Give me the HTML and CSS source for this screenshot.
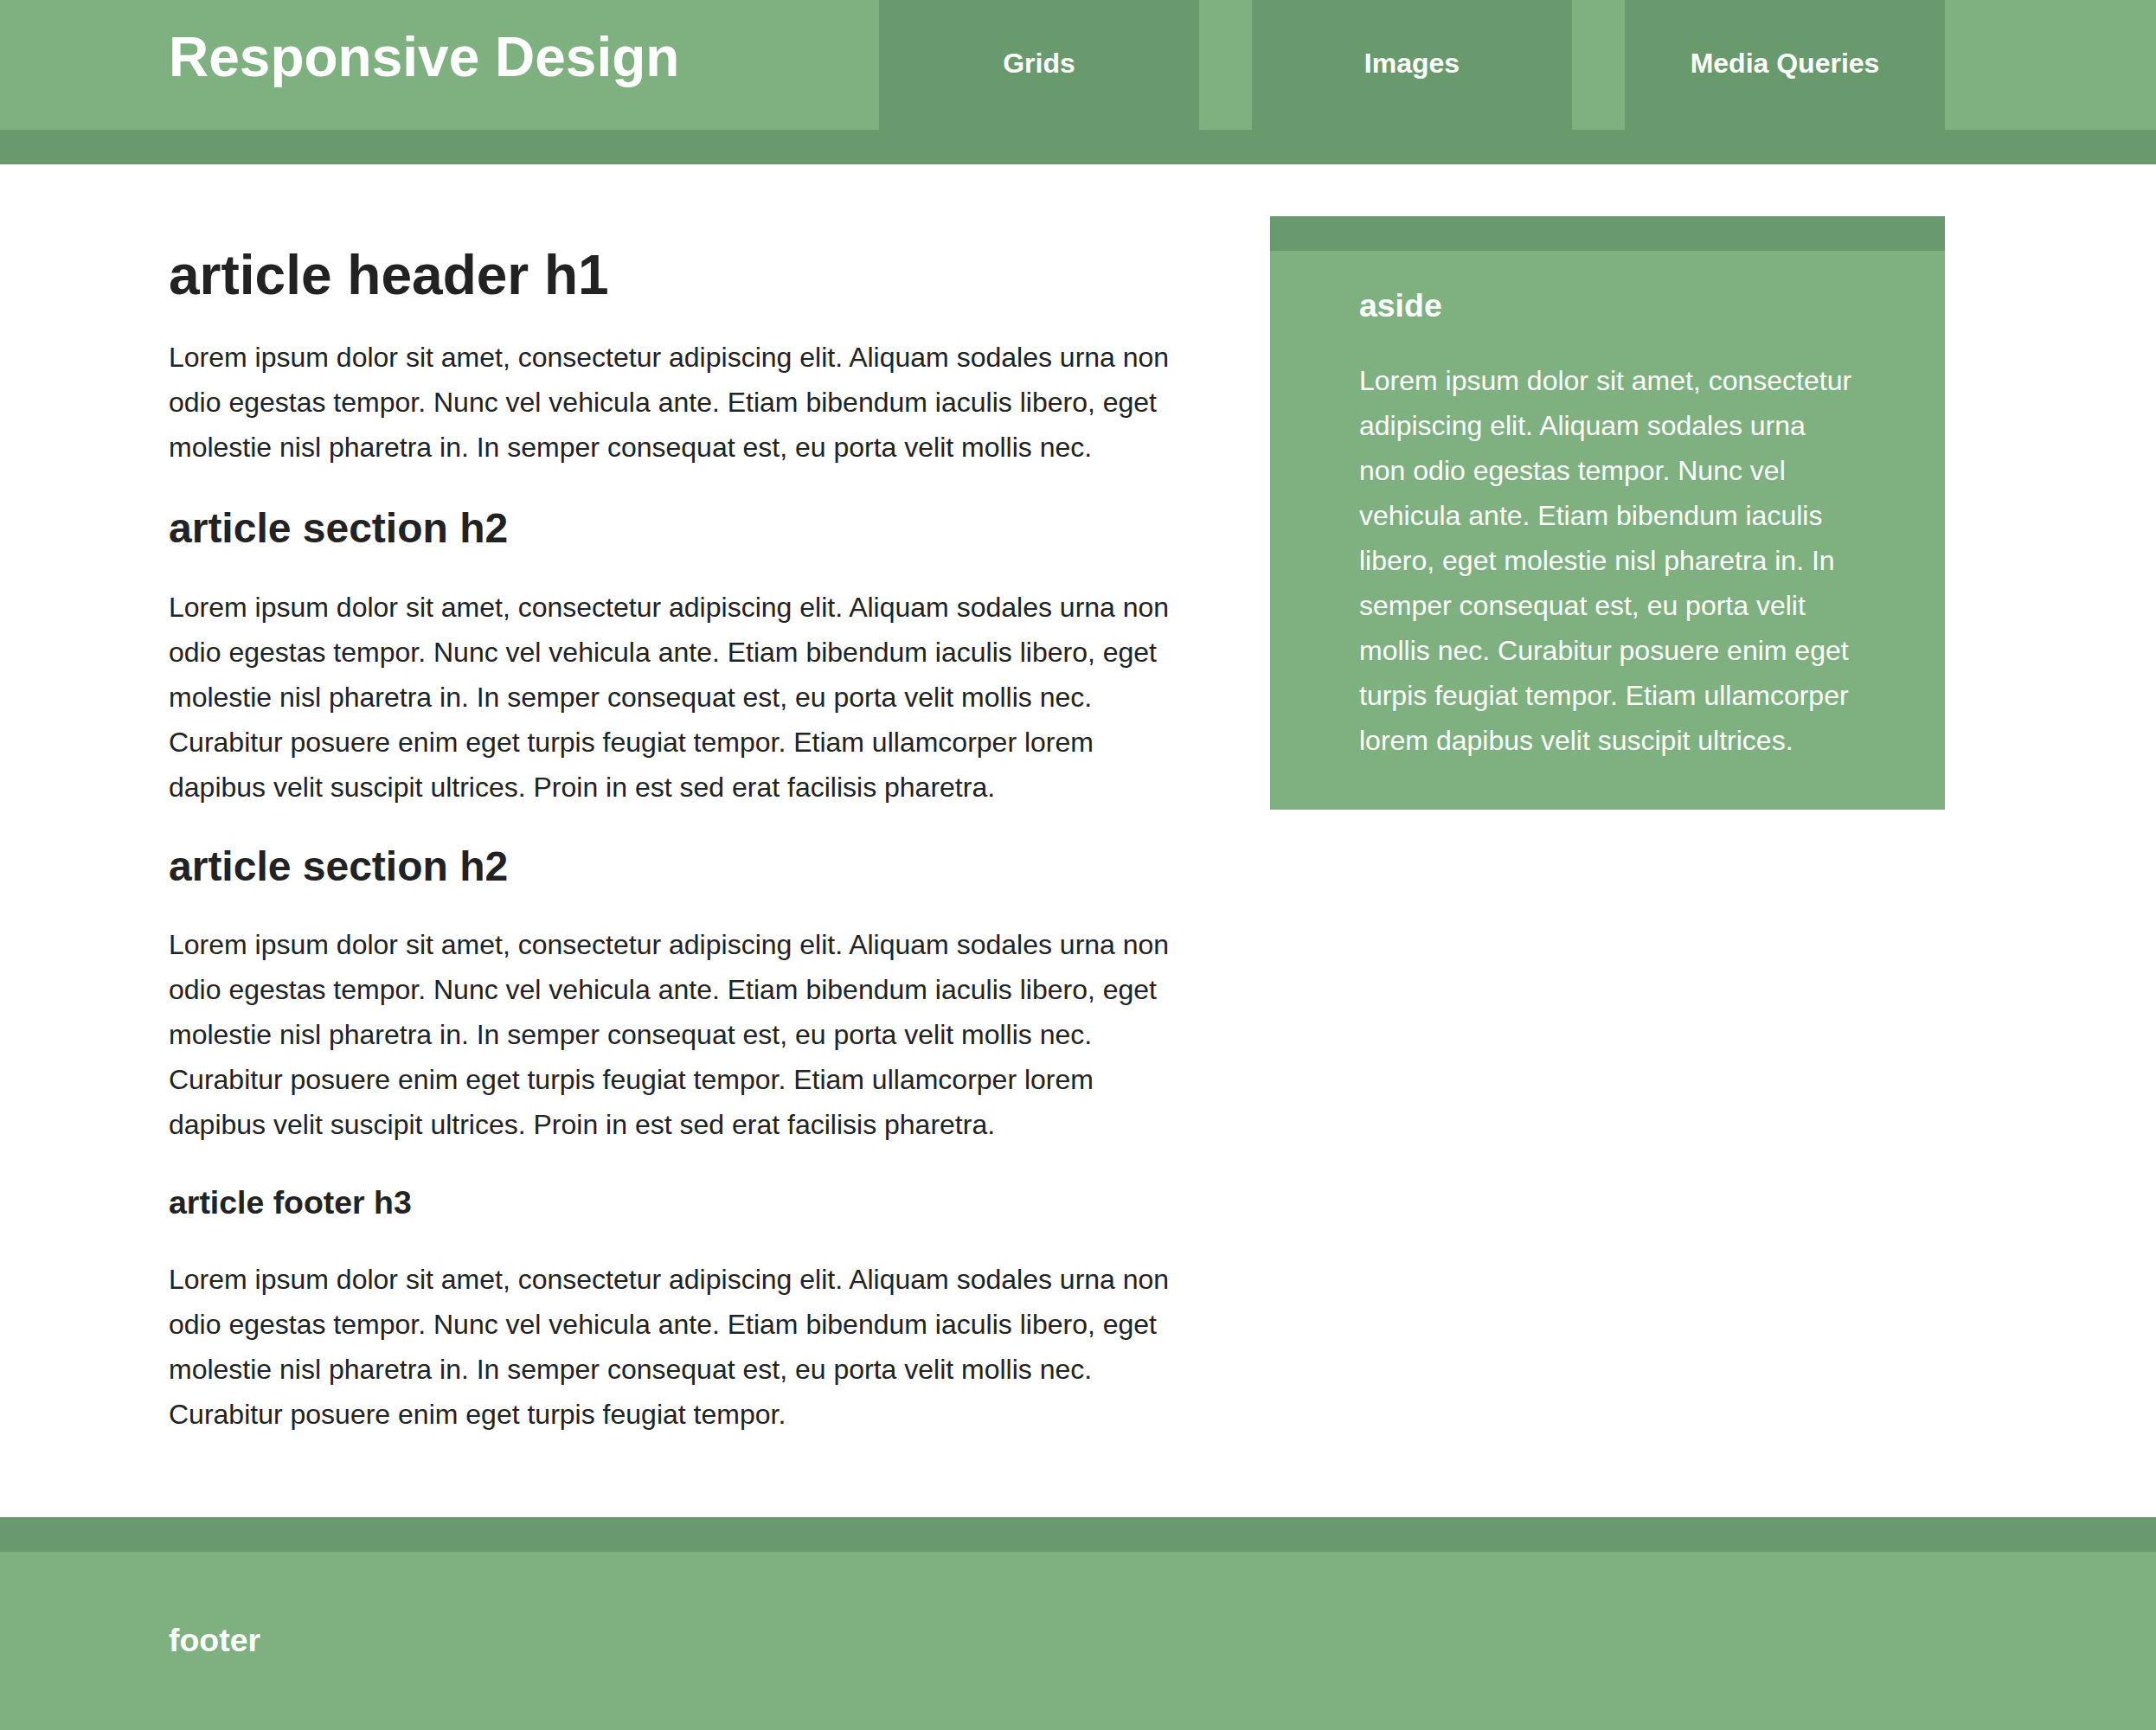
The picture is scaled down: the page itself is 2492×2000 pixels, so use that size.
FILE: index.html
```html
<!DOCTYPE html>
<html lang="en">
<head>
<meta charset="utf-8">
<title>Responsive Design</title>
<link rel="stylesheet" href="styles.css">
</head>
<body>
<header class="site-header">
  <div class="site-title">Responsive Design</div>
  <nav class="site-nav">
    <a class="nav-item" href="#">Grids</a>
    <a class="nav-item" href="#">Images</a>
    <a class="nav-item" href="#">Media Queries</a>
  </nav>
</header>
<main class="layout">
  <article class="article">
    <h1 class="h1">article header h1</h1>
    <p class="text">Lorem ipsum dolor sit amet, consectetur adipiscing elit. Aliquam sodales urna non odio egestas tempor. Nunc vel vehicula ante. Etiam bibendum iaculis libero, eget molestie nisl pharetra in. In semper consequat est, eu porta velit mollis nec.</p>
    <h2 class="h2">article section h2</h2>
    <p class="text">Lorem ipsum dolor sit amet, consectetur adipiscing elit. Aliquam sodales urna non odio egestas tempor. Nunc vel vehicula ante. Etiam bibendum iaculis libero, eget molestie nisl pharetra in. In semper consequat est, eu porta velit mollis nec. Curabitur posuere enim eget turpis feugiat tempor. Etiam ullamcorper lorem dapibus velit suscipit ultrices. Proin in est sed erat facilisis pharetra.</p>
    <h2 class="h2 h2-second">article section h2</h2>
    <p class="text">Lorem ipsum dolor sit amet, consectetur adipiscing elit. Aliquam sodales urna non odio egestas tempor. Nunc vel vehicula ante. Etiam bibendum iaculis libero, eget molestie nisl pharetra in. In semper consequat est, eu porta velit mollis nec. Curabitur posuere enim eget turpis feugiat tempor. Etiam ullamcorper lorem dapibus velit suscipit ultrices. Proin in est sed erat facilisis pharetra.</p>
    <h3 class="h3">article footer h3</h3>
    <p class="text">Lorem ipsum dolor sit amet, consectetur adipiscing elit. Aliquam sodales urna non odio egestas tempor. Nunc vel vehicula ante. Etiam bibendum iaculis libero, eget molestie nisl pharetra in. In semper consequat est, eu porta velit mollis nec. Curabitur posuere enim eget turpis feugiat tempor.</p>
  </article>
  <aside class="aside">
    <h3 class="aside-title">aside</h3>
    <p class="aside-text">Lorem ipsum dolor sit amet, consectetur adipiscing elit. Aliquam sodales urna non odio egestas tempor. Nunc vel vehicula ante. Etiam bibendum iaculis libero, eget molestie nisl pharetra in. In semper consequat est, eu porta velit mollis nec. Curabitur posuere enim eget turpis feugiat tempor. Etiam ullamcorper lorem dapibus velit suscipit ultrices.</p>
  </aside>
</main>
<footer class="site-footer">
  <h3 class="footer-title">footer</h3>
</footer>
</body>
</html>
```
FILE: styles.css
```css
html, body {
  margin: 0;
  padding: 0;
  background: #ffffff;
}

body {
  font-family: "Liberation Sans", Arial, Helvetica, sans-serif;
  font-size: 32px;
  line-height: 52px;
  color: #222222;
}

.site-header {
  display: flex;
  align-items: flex-start;
  height: 150px;
  padding: 0 244px 0 195px;
  background: #7eb17f;
  border-bottom: 40px solid #699a6e;
}

.site-title {
  flex: 1;
  padding-top: 28px;
  font-size: 64px;
  line-height: 76.8px;
  font-weight: bold;
  color: #ffffff;
}

.site-nav {
  display: flex;
  gap: 61px;
  height: 150px;
}

.nav-item {
  display: flex;
  align-items: center;
  justify-content: center;
  width: 370px;
  height: 150px;
  box-sizing: border-box;
  padding-bottom: 4px;
  background: #699a6e;
  color: #ffffff;
  font-weight: bold;
  font-size: 32px;
  line-height: 36.8px;
  text-decoration: none;
}

.layout {
  display: flex;
  align-items: flex-start;
  padding: 60px 244px 93px 195px;
}

.article {
  width: 1180px;
}

.h1 {
  margin: 30px 0 30.5px;
  font-size: 64px;
  line-height: 76.8px;
  font-weight: bold;
}

.h2 {
  margin: 38.5px 0 37px;
  font-size: 48px;
  line-height: 57.6px;
  font-weight: bold;
}

.h2-second {
  margin-top: 37px;
  margin-bottom: 35.5px;
}

.h3 {
  margin: 41.5px 0 40.5px;
  font-size: 37.44px;
  line-height: 44.9px;
  font-weight: bold;
}

.text {
  margin: 0;
}

.aside {
  width: 780px;
  margin-left: auto;
  box-sizing: border-box;
  padding: 41px 103px 21.5px;
  background: #7eb17f;
  border-top: 40px solid #699a6e;
  color: #ffffff;
}

.aside-title {
  margin: 0 0 38.5px;
  font-size: 37.44px;
  line-height: 44.9px;
  font-weight: bold;
}

.aside-text {
  margin: 0 0 32px;
}

.site-footer {
  padding: 80px 195px 81px;
  background: #7eb17f;
  border-top: 40px solid #699a6e;
  color: #ffffff;
}

.footer-title {
  margin: 0;
  font-size: 37.44px;
  line-height: 44.9px;
  font-weight: bold;
}
```
